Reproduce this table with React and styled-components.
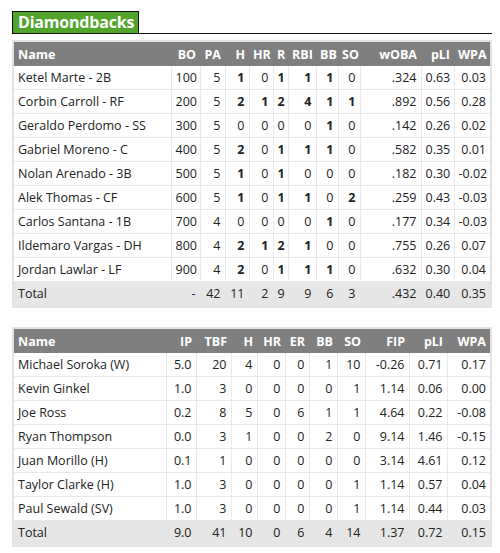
import styled, { createGlobalStyle } from "styled-components";

const GlobalStyle = createGlobalStyle`
  body {
    margin: 0;
    background: #fff;
    font-family: "Open Sans", "Liberation Sans", sans-serif;
    color: #222;
  }
`;

const batters = [
  ["Ketel Marte - 2B", "100", 5, 1, 0, 1, 1, 1, 0, ".324", "0.63", "0.03"],
  ["Corbin Carroll - RF", "200", 5, 2, 1, 2, 4, 1, 1, ".892", "0.56", "0.28"],
  ["Geraldo Perdomo - SS", "300", 5, 0, 0, 0, 0, 1, 0, ".142", "0.26", "0.02"],
  ["Gabriel Moreno - C", "400", 5, 2, 0, 1, 1, 1, 0, ".582", "0.35", "0.01"],
  ["Nolan Arenado - 3B", "500", 5, 1, 0, 1, 0, 0, 0, ".182", "0.30", "-0.02"],
  ["Alek Thomas - CF", "600", 5, 1, 0, 1, 1, 0, 2, ".259", "0.43", "-0.03"],
  ["Carlos Santana - 1B", "700", 4, 0, 0, 0, 0, 1, 0, ".177", "0.34", "-0.03"],
  ["Ildemaro Vargas - DH", "800", 4, 2, 1, 2, 1, 0, 0, ".755", "0.26", "0.07"],
  ["Jordan Lawlar - LF", "900", 4, 2, 0, 1, 1, 1, 0, ".632", "0.30", "0.04"],
];
const batTotal = ["Total", "-", 42, 11, 2, 9, 9, 6, 3, ".432", "0.40", "0.35"];
const batCols = [
  ["Name", 157], ["BO", 29], ["PA", 25], ["H", 24], ["HR", 24], ["R", 15],
  ["RBI", 28], ["BB", 22], ["SO", 22], ["wOBA", 61], ["pLI", 33], ["WPA", 36],
];
// columns 3..8 are counting stats, shown bold when not zero
const boldCols = [3, 4, 5, 6, 7, 8];

const pitchers = [
  ["Michael Soroka (W)", "5.0", 20, 4, 0, 0, 1, 10, "-0.26", "0.71", "0.17"],
  ["Kevin Ginkel", "1.0", 3, 0, 0, 0, 0, 1, "1.14", "0.06", "0.00"],
  ["Joe Ross", "0.2", 8, 5, 0, 6, 1, 1, "4.64", "0.22", "-0.08"],
  ["Ryan Thompson", "0.0", 3, 1, 0, 0, 2, 0, "9.14", "1.46", "-0.15"],
  ["Juan Morillo (H)", "0.1", 1, 0, 0, 0, 0, 0, "3.14", "4.61", "0.12"],
  ["Taylor Clarke (H)", "1.0", 3, 0, 0, 0, 0, 1, "1.14", "0.57", "0.04"],
  ["Paul Sewald (SV)", "1.0", 3, 0, 0, 0, 0, 1, "1.14", "0.44", "0.03"],
];
const pitTotal = ["Total", "9.0", 41, 10, 0, 6, 4, 14, "1.37", "0.72", "0.15"];
const pitCols = [
  ["Name", 152], ["IP", 30], ["TBF", 35], ["H", 26], ["HR", 28], ["ER", 24],
  ["BB", 28], ["SO", 28], ["FIP", 44], ["pLI", 38], ["WPA", 43],
];

const Page = styled.div`
  width: 480px;
  padding: 11px 8px 0 12px;
`;

const TitleBar = styled.div`
  display: flex;
  align-items: flex-end;
  margin-bottom: 6px;
`;

const Title = styled.h2`
  margin: 0;
  background: #52a52b;
  border: 1px solid #111;
  color: #fff;
  font-size: 16px;
  letter-spacing: -0.2px;
  font-weight: 700;
  line-height: 21px;
  padding: 0 4px 0 5px;
`;

const Rule = styled.div`
  flex: 1;
  border-bottom: 1px solid #111;
`;

const Frame = styled.div`
  border: 2px solid #e3e3e3;
  margin-bottom: 19px;
`;

const Table = styled.table`
  width: 100%;
  border-collapse: collapse;
  table-layout: fixed;
  font-size: 12.5px;
`;

const Head = styled.th`
  background: #7f7f7f;
  color: #fff;
  font-weight: 700;
  height: 24px;
  padding: 0 4px;
  text-align: ${({ $left }) => ($left ? "left" : "right")};
  white-space: nowrap;
`;

const Row = styled.tr`
  background: ${({ $total }) => ($total ? "#e6e6e6" : "#fff")};
`;

const Cell = styled.td`
  height: 23px;
  padding: 0 4px;
  border: 1px solid ${({ $total }) => ($total ? "#e6e6e6" : "#e9e9e9")};
  border-top: none;
  text-align: ${({ $left }) => ($left ? "left" : "right")};
  font-weight: ${({ $bold }) => ($bold ? 700 : 400)};
  white-space: nowrap;
  &:first-child {
    border-left: none;
  }
  &:last-child {
    border-right: none;
  }
`;

function StatTable({ cols, rows, total, bold = [] }) {
  return (
    <Frame>
      <Table>
        <colgroup>
          {cols.map(([name, w]) => (
            <col key={name} style={{ width: w }} />
          ))}
        </colgroup>
        <thead>
          <tr>
            {cols.map(([name], i) => (
              <Head key={name} $left={i === 0}>
                {name}
              </Head>
            ))}
          </tr>
        </thead>
        <tbody>
          {rows.map((r) => (
            <Row key={r[0]}>
              {r.map((v, i) => (
                <Cell key={i} $left={i === 0} $bold={bold.includes(i) && v !== 0}>
                  {v}
                </Cell>
              ))}
            </Row>
          ))}
          <Row $total>
            {total.map((v, i) => (
              <Cell key={i} $total $left={i === 0}>
                {v}
              </Cell>
            ))}
          </Row>
        </tbody>
      </Table>
    </Frame>
  );
}

export default function App() {
  return (
    <Page>
      <GlobalStyle />
      <TitleBar>
        <Title>Diamondbacks</Title>
        <Rule />
      </TitleBar>
      <StatTable cols={batCols} rows={batters} total={batTotal} bold={boldCols} />
      <StatTable cols={pitCols} rows={pitchers} total={pitTotal} />
    </Page>
  );
}
